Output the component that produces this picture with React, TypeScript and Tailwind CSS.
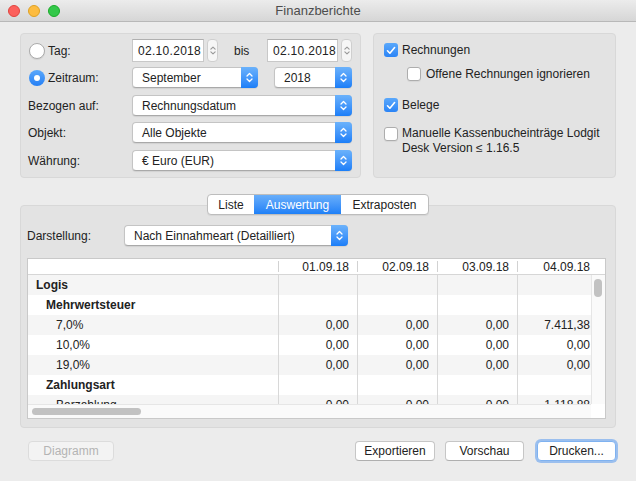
import React from "react";

const font = { fontFamily: '"Liberation Sans", Arial, sans-serif' };

type Row = {
  label: string;
  level: number;
  bold?: boolean;
  values?: string[];
};

const rows: Row[] = [
  { label: "Logis", level: 0, bold: true },
  { label: "Mehrwertsteuer", level: 1, bold: true },
  { label: "7,0%", level: 2, values: ["0,00", "0,00", "0,00", "7.411,38"] },
  { label: "10,0%", level: 2, values: ["0,00", "0,00", "0,00", "0,00"] },
  { label: "19,0%", level: 2, values: ["0,00", "0,00", "0,00", "0,00"] },
  { label: "Zahlungsart", level: 1, bold: true },
  { label: "Barzahlung", level: 2, values: ["0,00", "0,00", "0,00", "1.118,88"] },
];

const dates = ["01.09.18", "02.09.18", "03.09.18", "04.09.18"];
const colW = ["w-[79px]", "w-[80px]", "w-[80px]", "w-[81px]"];
const indent = ["pl-[8px]", "pl-[18px]", "pl-[28px]"];

function Chevrons({ color = "white", w = 7, h = 11 }: { color?: string; w?: number; h?: number }) {
  return (
    <svg width={w} height={h} viewBox="0 0 7 11" fill="none">
      <path d="M1 4 L3.5 1.5 L6 4" stroke={color} strokeWidth="1.3" strokeLinecap="round" strokeLinejoin="round" />
      <path d="M1 7 L3.5 9.5 L6 7" stroke={color} strokeWidth="1.3" strokeLinecap="round" strokeLinejoin="round" />
    </svg>
  );
}

function Popup({ text, width }: { text: string; width: string }) {
  return (
    <div
      className={`${width} h-[21px] flex bg-white rounded-[4px] border border-[#c4c4c4] border-b-[#a9a9a9] shadow-[0_1px_1px_rgba(0,0,0,0.08)]`}
    >
      <div className="flex-1 flex items-center pl-[9px] text-[12px] text-[#222] whitespace-nowrap overflow-hidden">
        {text}
      </div>
      <div className="w-[17px] -my-px -mr-px rounded-r-[4px] bg-gradient-to-b from-[#6bb2fb] to-[#1a7ef8] flex items-center justify-center">
        <Chevrons />
      </div>
    </div>
  );
}

function DateField({ value, width }: { value: string; width: string }) {
  return (
    <div className="flex items-center">
      <div
        className={`${width} h-[23px] bg-white border border-[#c8c8c8] border-t-[#b0b0b0] flex items-center pl-[5px] text-[12px] text-[#222] tracking-[0.3px]`}
      >
        {value}
      </div>
      <div className="ml-[3px] w-[11px] h-[23px] rounded-[4px] border border-[#cfcfcf] bg-[#f6f6f6] flex items-center justify-center">
        <Chevrons color="#9a9a9a" w={6} h={15} />
      </div>
    </div>
  );
}

function Radio({ on }: { on?: boolean }) {
  if (on)
    return (
      <div className="w-[16px] h-[16px] rounded-full bg-gradient-to-b from-[#5aa8fb] to-[#237ff5] flex items-center justify-center">
        <div className="w-[6px] h-[6px] rounded-full bg-white" />
      </div>
    );
  return <div className="w-[16px] h-[16px] rounded-full bg-white border border-[#ababab] shadow-[0_1px_1px_rgba(0,0,0,0.08)]" />;
}

function Check({ on }: { on?: boolean }) {
  if (on)
    return (
      <div className="w-[14px] h-[14px] shrink-0 rounded-[3px] bg-gradient-to-b from-[#5aa8fb] to-[#2a84f6] flex items-center justify-center">
        <svg width="10" height="9" viewBox="0 0 10 9" fill="none">
          <path d="M1.5 4.8 L3.9 7.2 L8.6 1.5" stroke="white" strokeWidth="1.6" strokeLinecap="round" strokeLinejoin="round" />
        </svg>
      </div>
    );
  return <div className="w-[14px] h-[14px] shrink-0 rounded-[3px] bg-white border border-[#adadad] shadow-[0_1px_1px_rgba(0,0,0,0.06)]" />;
}

function Button({ label, width, disabled, focus }: { label: string; width: string; disabled?: boolean; focus?: boolean }) {
  let cls = "bg-white border-[#c6c6c6] border-b-[#afafaf] text-[#222]";
  if (disabled) cls = "bg-[#f3f3f3] border-[#dcdcdc] text-[#b4b4b4]";
  if (focus) cls = "bg-white border-[#7fb2f0] text-[#222] shadow-[0_0_0_2px_rgba(90,155,240,0.55)]";
  return (
    <div className={`${width} h-[20px] rounded-[4px] border flex items-center justify-center text-[12px] ${cls}`}>
      {label}
    </div>
  );
}

export default function App() {
  return (
    <div className="w-[636px] h-[481px] bg-[#ececec] overflow-hidden text-[#222]" style={font}>
      {/* title bar */}
      <div className="h-[22px] flex items-center bg-gradient-to-b from-[#ececec] to-[#d6d6d6] border-b border-[#b8b8b8]">
        <div className="w-[70px] flex items-center gap-[8px] pl-[8px]">
          <div className="w-[12px] h-[12px] rounded-full bg-[#fc605c] border border-[#e0443e]" />
          <div className="w-[12px] h-[12px] rounded-full bg-[#fdbc40] border border-[#dea123]" />
          <div className="w-[12px] h-[12px] rounded-full bg-[#34c84a] border border-[#1aab29]" />
        </div>
        <div className="flex-1 text-center text-[13px] text-[#4d4d4d]">Finanzberichte</div>
        <div className="w-[70px]" />
      </div>

      <div className="px-[20px] pt-[11px]">
        {/* top panels */}
        <div className="flex gap-[12px]">
          <div className="w-[341px] h-[145px] rounded-[4px] bg-[#e3e3e3] border border-[#d8d8d8] pt-[5px] pl-[7px] text-[12px]">
            <div className="flex items-center h-[23px]">
              <div className="w-[104px] flex items-center">
                <span className="ml-px"><Radio /></span>
                <span className="ml-[3px]">Tag:</span>
              </div>
              <DateField value="02.10.2018" width="w-[72px]" />
              <span className="ml-[16px] w-[17px]">bis</span>
              <span className="ml-[16px]">
                <DateField value="02.10.2018" width="w-[71px]" />
              </span>
            </div>
            <div className="flex items-center h-[21px] mt-[5px]">
              <div className="w-[104px] flex items-center">
                <span className="ml-px"><Radio on /></span>
                <span className="ml-[3px]">Zeitraum:</span>
              </div>
              <Popup text="September" width="w-[126px]" />
              <span className="ml-[16px]">
                <Popup text="2018" width="w-[78px]" />
              </span>
            </div>
            <div className="flex items-center h-[21px] mt-[7px]">
              <div className="w-[104px]">Bezogen auf:</div>
              <Popup text="Rechnungsdatum" width="w-[220px]" />
            </div>
            <div className="flex items-center h-[21px] mt-[6px]">
              <div className="w-[104px]">Objekt:</div>
              <Popup text="Alle Objekte" width="w-[220px]" />
            </div>
            <div className="flex items-center h-[21px] mt-[7px]">
              <div className="w-[104px]">Währung:</div>
              <Popup text="€ Euro (EUR)" width="w-[220px]" />
            </div>
          </div>

          <div className="w-[243px] h-[145px] rounded-[4px] bg-[#e3e3e3] border border-[#d8d8d8] pl-[10px] pt-[9px] text-[12px]">
            <div className="flex items-center gap-[4px] h-[14px]">
              <Check on />
              <span>Rechnungen</span>
            </div>
            <div className="flex items-center gap-[5px] h-[14px] mt-[10px] ml-[23px]">
              <Check />
              <span>Offene Rechnungen ignorieren</span>
            </div>
            <div className="flex items-center gap-[4px] h-[14px] mt-[17px]">
              <Check on />
              <span>Belege</span>
            </div>
            <div className="flex items-start gap-[4px] mt-[15px]">
              <Check />
              <span className="leading-[15px] -mt-px">
                Manuelle Kassenbucheinträge Lodgit
                <br />
                Desk Version ≤ 1.16.5
              </span>
            </div>
          </div>
        </div>

        {/* segmented control */}
        <div className="relative z-10 mt-[16px] -mb-[10px] flex justify-center">
          <div className="h-[21px] flex rounded-[4px] border border-[#bdbdbd] bg-white text-[12px] overflow-hidden shadow-[0_1px_1px_rgba(0,0,0,0.06)]">
            <div className="w-[46px] flex items-center justify-center">Liste</div>
            <div className="w-[87px] flex items-center justify-center bg-gradient-to-b from-[#68aefa] to-[#1d80f7] text-white">
              Auswertung
            </div>
            <div className="w-[87px] flex items-center justify-center">Extraposten</div>
          </div>
        </div>

        {/* bottom panel */}
        <div className="h-[223px] rounded-[4px] bg-[#e3e3e3] border border-[#d8d8d8] pt-[19px] pl-[6px] text-[12px]">
          <div className="flex items-center h-[21px]">
            <div className="w-[97px]">Darstellung:</div>
            <Popup text="Nach Einnahmeart (Detailliert)" width="w-[224px]" />
          </div>

          <div className="mt-[12px] w-[579px] border border-[#c9c9c9] bg-white">
            {/* header */}
            <div className="h-[16px] flex border-b border-[#d6d6d6]">
              <div className="w-[250px]" />
              {dates.map((d, i) => (
                <div key={d} className={`${colW[i]} flex items-center`}>
                  <div className="w-px h-[11px] bg-[#d2d2d2]" />
                  <div className="flex-1 text-right pr-[8px]">{d}</div>
                </div>
              ))}
            </div>

            <div className="flex">
              <div className="flex-1 overflow-hidden">
                <div className="h-[129px] overflow-hidden">
                  {rows.map((r, ri) => (
                    <div key={r.label} className={`h-[20px] flex w-[570px] ${ri % 2 === 0 ? "bg-[#f5f5f5]" : "bg-white"}`}>
                      <div className={`w-[250px] flex items-center ${indent[r.level]} ${r.bold ? "font-bold" : ""}`}>
                        {r.label}
                      </div>
                      {colW.map((w, ci) => (
                        <div key={ci} className={`${w} border-l border-[#d8d8d8] flex items-center justify-end pr-[8px]`}>
                          {r.values ? r.values[ci] : ""}
                        </div>
                      ))}
                    </div>
                  ))}
                </div>
                {/* horizontal scrollbar */}
                <div className="h-[14px] bg-[#fafafa] border-t border-[#e6e6e6] flex items-center pl-[4px]">
                  <div className="w-[109px] h-[7px] rounded-full bg-[#c2c2c2]" />
                </div>
              </div>
              {/* vertical scrollbar */}
              <div className="w-[14px] flex flex-col">
                <div className="h-[129px] bg-[#fafafa] border-l border-[#e6e6e6] pt-[4px] pl-[2px]">
                  <div className="w-[8px] h-[18px] rounded-full bg-[#c2c2c2]" />
                </div>
                <div className="flex-1 bg-white" />
              </div>
            </div>
          </div>
        </div>

        {/* buttons */}
        <div className="flex items-center mt-[13px] pl-[8px]">
          <Button label="Diagramm" width="w-[86px]" disabled />
          <div className="flex-1" />
          <Button label="Exportieren" width="w-[80px]" />
          <span className="ml-[10px]">
            <Button label="Vorschau" width="w-[79px]" />
          </span>
          <span className="ml-[13px]">
            <Button label="Drucken..." width="w-[79px]" focus />
          </span>
        </div>
      </div>
    </div>
  );
}
